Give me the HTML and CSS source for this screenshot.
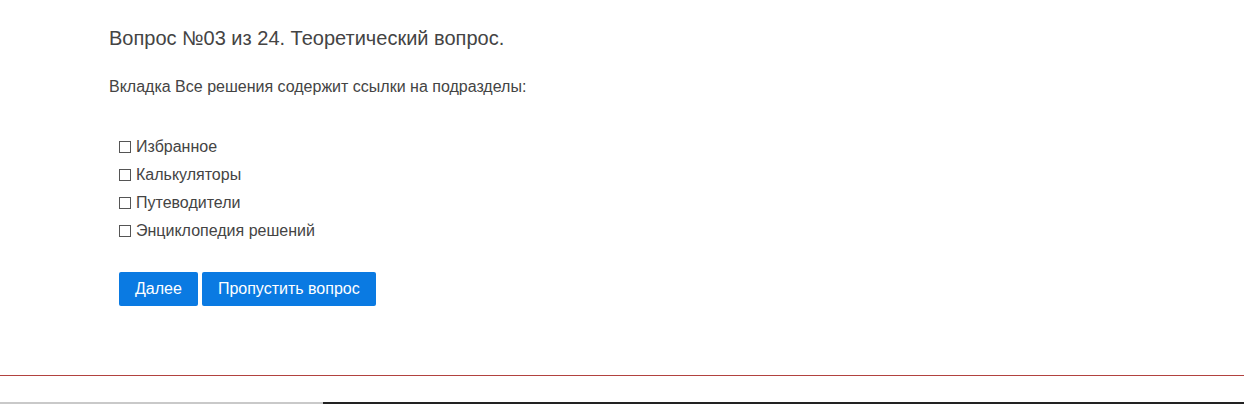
FILE: index.html
```html
<!DOCTYPE html>
<html lang="ru">
<head>
<meta charset="utf-8">
<title>Вопрос</title>
<link rel="stylesheet" href="styles.css">
</head>
<body>
<div class="page">
  <main class="content">
    <h1 class="title">Вопрос №03 из 24. Теоретический вопрос.</h1>
    <p class="question">Вкладка Все решения содержит ссылки на подразделы:</p>
    <ul class="options">
      <li class="option"><span class="box"></span><span>Избранное</span></li>
      <li class="option"><span class="box"></span><span>Калькуляторы</span></li>
      <li class="option"><span class="box"></span><span>Путеводители</span></li>
      <li class="option"><span class="box"></span><span>Энциклопедия решений</span></li>
    </ul>
    <div class="actions">
      <button class="btn btn-next">Далее</button>
      <button class="btn btn-skip">Пропустить вопрос</button>
    </div>
  </main>
  <div class="rule"></div>
  <div class="footer">
    <div class="bar">
      <div class="bar-light"></div>
      <div class="bar-dark"></div>
    </div>
  </div>
</div>
</body>
</html>
```

FILE: styles.css
```css
html, body {
  margin: 0;
  padding: 0;
  background: #fff;
}
body {
  font-family: "Liberation Sans", Arial, sans-serif;
  color: #444;
}
.page {
  width: 1244px;
  height: 404px;
  display: flex;
  flex-direction: column;
}
.content {
  height: 375px;
  padding: 0 0 0 109px;
  box-sizing: border-box;
  display: flex;
  flex-direction: column;
}
.title {
  margin: 26px 0 0 0;
  font-size: 20px;
  font-weight: normal;
  line-height: 24px;
  color: #444;
}
.question {
  margin: 28px 0 0 0;
  font-size: 16px;
  line-height: 18px;
  color: #444;
}
.options {
  list-style: none;
  margin: 42px 0 0 10px;
  padding: 0;
  display: flex;
  flex-direction: column;
  gap: 10px;
}
.option {
  display: flex;
  align-items: center;
  gap: 5px;
  font-size: 16px;
  line-height: 18px;
  color: #444;
}
.box {
  width: 10px;
  height: 10px;
  border: 1px solid #555;
  background: #fff;
  flex: none;
}
.actions {
  margin: 32px 0 0 10px;
  display: flex;
  gap: 4px;
}
.btn {
  height: 34px;
  padding: 0 16px;
  border: none;
  border-radius: 2px;
  background: #0a7ae2;
  color: #fff;
  font-family: "Liberation Sans", Arial, sans-serif;
  font-size: 16px;
  cursor: pointer;
}
.rule {
  height: 1px;
  background: #b2423f;
}
.footer {
  flex: 1;
  display: flex;
  flex-direction: column;
  justify-content: flex-end;
}
.bar {
  display: flex;
  height: 2px;
}
.bar-light {
  width: 323px;
  background: #c9c9c9;
}
.bar-dark {
  flex: 1;
  background: #222;
}
```
